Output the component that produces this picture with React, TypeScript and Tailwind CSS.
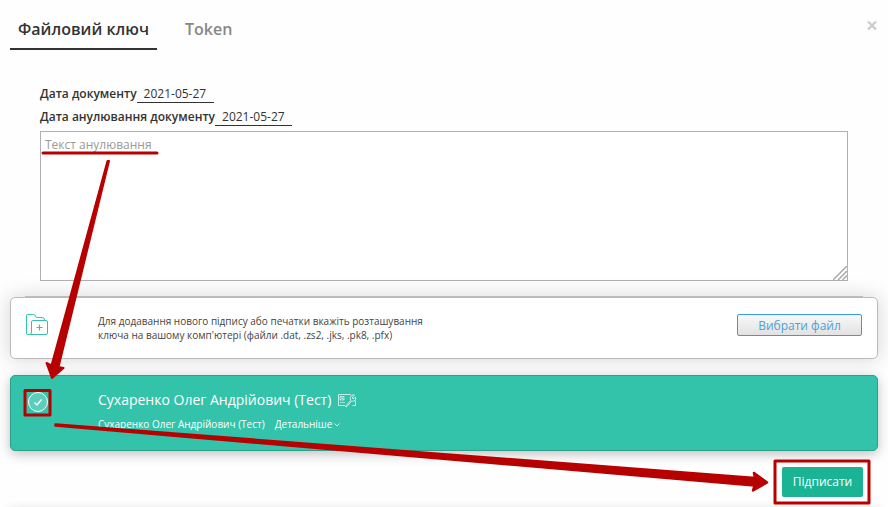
import React from "react";

function Tabs() {
  return (
    <header className="flex h-[50px] items-start pl-[10px]">
      <nav className="flex">
        <button className="h-[50px] w-[147px] whitespace-nowrap border-b-2 border-[#333] pt-[9px] text-center text-[16px] font-semibold text-[#333]">Файловий ключ</button>
        <button className="h-[50px] whitespace-nowrap pl-[28px] pt-[8px] text-[16px] font-semibold text-[#888]">Token</button>
      </nav>
      <button aria-label="Закрити" className="ml-auto mr-[11px] mt-[20px]">
        <svg width="10" height="10" viewBox="0 0 10 10" className="block" fill="none" stroke="#ccc" strokeWidth="2.4"><path d="M1 1.500L9 9.500M9 1.500L1 9.500" /></svg>
      </button>
    </header>
  );
}

function DateRow({ label, value }: { label: string; value: string }) {
  return (
    <div className="flex h-[23px] items-start whitespace-nowrap text-[12px] leading-[17px] text-[#333]">
      <span className="font-semibold">{label}</span>
      <span className="h-[18px] w-[77px] border-b border-[#333] pl-[7px]">{value}</span>
    </div>
  );
}

function FolderIcon() {
  return (
    <svg width="24" height="24" viewBox="0 0 24 24" className="mt-[15px] block shrink-0" fill="none" stroke="#33c3a9" strokeWidth="1">
      <path d="M4.500 21.500H2.500Q1.500 21.500 1.500 20.500V2.500Q1.500 1.500 2.500 1.500H8.500Q10 1.500 10.500 3Q11 4.500 12 4.500H17Q19.500 4.500 19.500 7" />
      <path d="M4.500 21.500Q6.500 21.500 6.500 19V9Q6.500 7.500 8 7.500H21Q22.500 7.500 22.500 9V20Q22.500 21.500 21 21.500H4.500" />
      <path d="M14.500 11.500V17.500M11.500 14.500H17.500" strokeWidth="1.100" />
    </svg>
  );
}

function CertificateIcon() {
  return (
    <svg width="19" height="15" viewBox="0 0 19 15" className="block" fill="none" stroke="#fff" strokeOpacity=".7">
      <path d="M7 12.500H.5V1.500H13M14.500 12.500H17.500V7.500" />
      <path d="M2 3.500H6V7H2ZM2 3.500L6 7M6 3.500L2 7M2 9.500H7" strokeOpacity=".55" />
      <path d="M7.500 13.500L12.500 7.500Q11.500 4.500 13.500 2.500Q15 1.500 16.500 2L14.500 4V5.500H16L17.500 4Q18.500 7 16 8Q14.500 8.500 13.500 8L9 13.500Q8 14.500 7.500 13.500Z" />
    </svg>
  );
}

function Annotations() {
  return (
    <svg width="888" height="507" viewBox="0 0 888 507" className="pointer-events-none absolute left-0 top-0" fill="#b70000" stroke="#b70000" strokeLinecap="round" strokeLinejoin="round">
      <path d="M43 153H157" strokeWidth="3" />
      <path d="M107.500 161L51.500 365.500L46.500 363L52 378L63.500 368L58.500 367L109 161Z" strokeWidth="2" />
      <path d="M55.500 424.500L755 478L754 473L767 482.500L753 490.500L754.500 485.500L55.500 425.500Z" strokeWidth="2.500" />
      <rect x="25" y="390.500" width="25" height="24.500" fill="none" strokeWidth="3" />
      <rect x="775" y="461" width="94" height="42" fill="none" strokeWidth="3" />
    </svg>
  );
}

export default function App() {
  return (
    <main className="relative h-[507px] w-[888px] overflow-hidden bg-[#fefefe] font-['Open_Sans','Noto_Sans',sans-serif]">
      <Tabs />
      <section className="ml-10 mt-[35px] w-[808px]">
        <DateRow label="Дата документу" value="2021-05-27" />
        <DateRow label="Дата анулювання документу" value="2021-05-27" />
        <div className="flex h-[150px] border border-[#b1b1b1] bg-white">
          <div className="pl-[4px] pt-[4px] text-[12px] leading-[17px] text-[#999]">Текст анулювання</div>
          <svg width="14" height="14" viewBox="0 0 14 14" className="ml-auto block self-end" stroke="#aaa" strokeWidth="1.500"><path d="M0 14L14 0M5 14L14 5M9.500 14L14 9.500" /></svg>
        </div>
      </section>
      <div className="ml-[25px] mt-[15px] h-px w-[838px] bg-[#ccc]" />
      <section className="mx-[10px] flex h-[62px] rounded-[5px] border border-[#bbb] bg-white pl-[14px] pr-[15px] shadow-[0_0_20px_rgba(0,0,0,0.17)]">
        <FolderIcon />
        <p className="ml-[49px] mt-[16px] whitespace-nowrap text-[10px] leading-[14px] text-[#444]">Для додавання нового підпису або печатки вкажіть розташування<br />ключа на вашому комп'ютері (файли .dat, .zs2, .jks, .pk8, .pfx)</p>
        <button className="ml-auto mt-[16px] h-[22px] w-[125px] rounded-[2px] border border-[#349fda] bg-linear-to-b from-[#f8f8f8] to-[#e2e2e2] pt-px text-[12px] leading-[20px] text-[#4aa3d9]">Вибрати файл</button>
      </section>
      <section className="relative mx-[10px] mt-[16px] flex h-[76px] rounded-[5px] border border-[#2d9f8a] bg-[#33c3aa] pl-[17px] text-white shadow-[0_3px_12px_rgba(0,0,0,0.25)]">
        <svg width="20" height="20" viewBox="0 0 20 20" className="mt-[16px] block shrink-0" fill="rgba(255,255,255,.2)" stroke="#fff"><circle cx="10" cy="10" r="9.500" /><path d="M6.500 10.500L9 13L13.500 7.500" fill="none" strokeWidth="1.400" /></svg>
        <div className="ml-[50px] whitespace-nowrap pt-[14px]">
          <div className="flex h-[20px] items-center gap-[7px] text-[14px] leading-[20px]"><span>Сухаренко Олег Андрійович (Тест)</span><CertificateIcon /></div>
          <div className="mt-[7px] flex items-center text-[10px] leading-[14px]"><span>Сухаренко Олег Андрійович (Тест)</span><span className="ml-[10px]">Детальніше</span><svg width="6" height="4" viewBox="0 0 6 4" className="ml-[2px] mt-[2px]" fill="none" stroke="#fff" strokeWidth=".8"><path d="M.5 .5L3 3L5.500 .5" /></svg></div>
        </div>
      </section>
      <div className="mr-[25px] mt-[16px] flex justify-end"><button className="h-[30px] w-[81px] rounded-[2px] bg-[#1ab394] text-[12px] text-white">Підписати</button></div>
      <div className="mx-[10px] mt-[14px] h-5 shadow-[0_0_12px_rgba(0,0,0,0.20)]" />
      <Annotations />
    </main>
  );
}
